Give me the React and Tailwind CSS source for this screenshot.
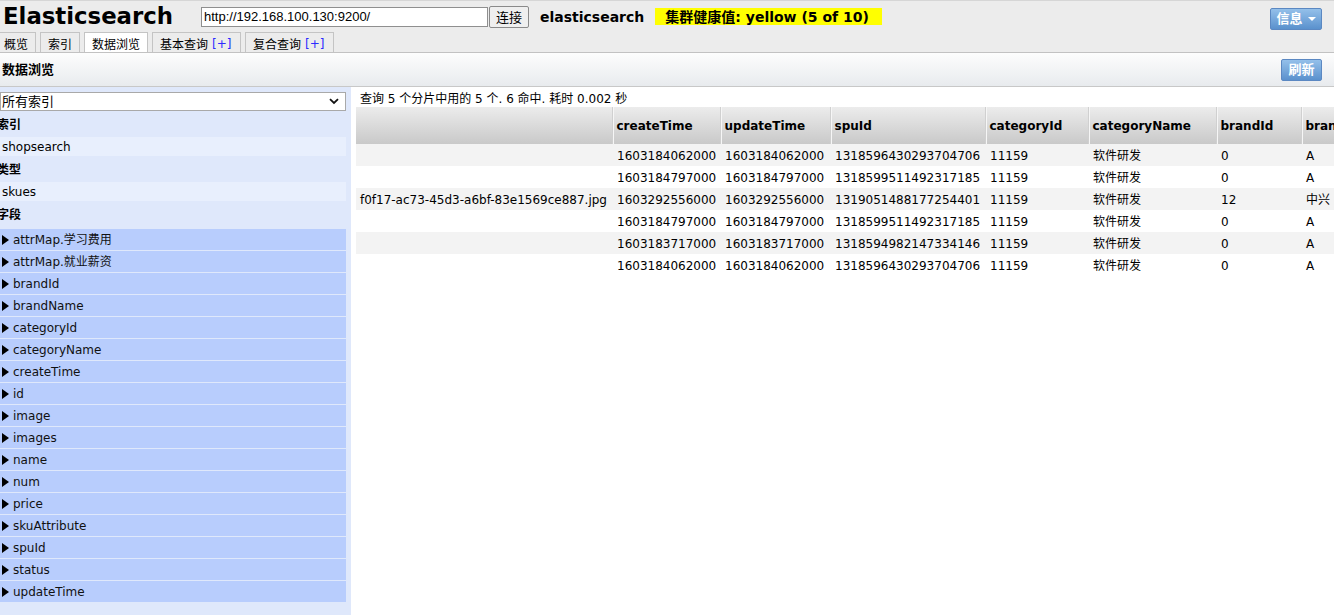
import React from "react";

const fields = [
  "attrMap.学习费用",
  "attrMap.就业薪资",
  "brandId",
  "brandName",
  "categoryId",
  "categoryName",
  "createTime",
  "id",
  "image",
  "images",
  "name",
  "num",
  "price",
  "skuAttribute",
  "spuId",
  "status",
  "updateTime",
];

const cols = [
  { name: "", w: 256 },
  { name: "createTime", w: 108 },
  { name: "updateTime", w: 110 },
  { name: "spuId", w: 155 },
  { name: "categoryId", w: 103 },
  { name: "categoryName", w: 128 },
  { name: "brandId", w: 85 },
  { name: "brandName", w: 200 },
];

const rows = [
  ["", "1603184062000", "1603184062000", "1318596430293704706", "11159", "软件研发", "0", "A"],
  ["", "1603184797000", "1603184797000", "1318599511492317185", "11159", "软件研发", "0", "A"],
  ["f0f17-ac73-45d3-a6bf-83e1569ce887.jpg", "1603292556000", "1603292556000", "1319051488177254401", "11159", "软件研发", "12", "中兴"],
  ["", "1603184797000", "1603184797000", "1318599511492317185", "11159", "软件研发", "0", "A"],
  ["", "1603183717000", "1603183717000", "1318594982147334146", "11159", "软件研发", "0", "A"],
  ["", "1603184062000", "1603184062000", "1318596430293704706", "11159", "软件研发", "0", "A"],
];

function Tab({ children, active, w, first }) {
  return (
    <div
      className={
        "h-[20px] border border-b-0 border-[#c4c4c4] pl-[7px] pt-[3px] flex items-center text-[12px] leading-none whitespace-nowrap overflow-hidden font-['Noto_Sans_CJK_SC','DejaVu_Sans',sans-serif] " +
        (active ? "bg-white" : "bg-[#ececec]") +
        (first ? " -ml-[4px]" : "")
      }
      style={{ width: w }}
    >
      {children}
    </div>
  );
}

function Plus() {
  return <span className="ml-[4px] text-[#2b2bff] font-['DejaVu_Sans',sans-serif]">[+]</span>;
}

export default function App() {
  return (
    <div className="w-[1334px] h-[615px] overflow-hidden bg-white text-black font-['DejaVu_Sans','Noto_Sans_CJK_SC',sans-serif] text-[12px]">
      {/* Header */}
      <div className="bg-[#ececec] border-t border-[#d6d6d6] border-b border-b-[#c2c2c2] flex flex-col">
        <div className="h-[31px] flex items-center">
          <div className="ml-[3px] text-[22.8px] font-bold leading-none">Elasticsearch</div>
          <input
            readOnly
            value="http://192.168.100.130:9200/"
            className="ml-[28px] w-[287px] h-[20px] bg-white border border-[#8f8f8f] px-[2px] text-[13px] font-['Liberation_Sans',sans-serif] outline-none"
          />
          <button className="ml-[1px] h-[22px] px-[6px] bg-[#efefef] border border-[#8a8a8a] rounded-[2px] text-[13px] font-['Noto_Sans_CJK_SC',sans-serif] leading-none">
            连接
          </button>
          <div className="ml-[11px] text-[14px] font-bold leading-none">elasticsearch</div>
          <div className="ml-[11px] h-[17px] w-[227px] bg-[#ffff00] flex items-center pl-[10px] text-[14px] font-bold leading-none whitespace-nowrap">
            集群健康值: yellow (5 of 10)
          </div>
          <button className="ml-auto mr-[12px] mt-[4px] h-[22px] w-[52px] rounded-[2px] border border-[#5b88c2] bg-gradient-to-b from-[#94c0ea] to-[#5a91cd] text-white font-bold text-[13px] flex items-center justify-center gap-[5px] leading-none">
            <span>信息</span>
            <span className="w-0 h-0 border-l-[4px] border-r-[4px] border-t-[4px] border-l-transparent border-r-transparent border-t-white"></span>
          </button>
        </div>
        <div className="h-[20px] flex items-end gap-[4px]">
          <Tab first w={40}>概览</Tab>
          <Tab w={40}>索引</Tab>
          <Tab active w={64}>数据浏览</Tab>
          <Tab w={89}>
            基本查询<Plus />
          </Tab>
          <Tab w={89}>
            复合查询<Plus />
          </Tab>
        </div>
      </div>

      {/* Section bar */}
      <div className="h-[34px] border-b border-[#c8c8c8] bg-gradient-to-b from-[#fdfdfd] to-[#e8ebee] flex items-center">
        <div className="ml-[2px] text-[13px] font-bold leading-none">数据浏览</div>
        <button className="ml-auto mr-[12px] h-[22px] w-[41px] rounded-[2px] border border-[#5b88c2] bg-gradient-to-b from-[#94c0ea] to-[#5a91cd] text-white font-bold text-[13px] flex items-center justify-center leading-none">
          刷新
        </button>
      </div>

      {/* Body */}
      <div className="h-[528px] flex">
        {/* Left */}
        <div className="w-[351px] shrink-0 bg-[#dfe8fb] pt-[5px]">
          <div className="w-[346px] h-[19px] bg-white border border-[#a9a9a9] flex items-center justify-between pl-[1px] pr-[6px]">
            <span className="text-[13px] leading-none">所有索引</span>
            <svg width="10" height="7" viewBox="0 0 10 7">
              <path d="M1 1.2 L5 5 L9 1.2" fill="none" stroke="#111" strokeWidth="1.8" />
            </svg>
          </div>
          <div className="h-[26px] flex items-center pt-[2px] -ml-[3px] font-bold leading-none">索引</div>
          <div className="h-[19px] w-[346px] bg-[#e8effd] flex items-center pl-[2px] leading-none">shopsearch</div>
          <div className="h-[26px] flex items-center pt-[2px] -ml-[3px] font-bold leading-none">类型</div>
          <div className="h-[19px] w-[346px] bg-[#e8effd] flex items-center pl-[2px] leading-none">skues</div>
          <div className="h-[28px] flex items-center -ml-[3px] font-bold leading-none">字段</div>
          <div className="flex flex-col gap-[1px] w-[346px]">
            {fields.map((f) => (
              <div key={f} className="h-[21px] bg-[#b8cdfd] flex items-center pl-[2px] leading-none text-[#111]">
                <span className="w-0 h-0 border-t-[5px] border-b-[5px] border-l-[7px] border-t-transparent border-b-transparent border-l-black"></span>
                <span className="ml-[4px]">{f}</span>
              </div>
            ))}
          </div>
        </div>

        {/* Right */}
        <div className="flex-1 min-w-0 overflow-hidden pl-[5px] pt-[5px]">
          <div className="ml-[4px] h-[15px] leading-[15px] whitespace-nowrap">
            查询 5 个分片中用的 5 个. 6 命中. 耗时 0.002 秒
          </div>
          <table className="table-fixed border-collapse" style={{ width: 1145 }}>
            <colgroup>
              {cols.map((c, i) => (
                <col key={i} style={{ width: c.w }} />
              ))}
            </colgroup>
            <thead>
              <tr className="h-[37px] bg-gradient-to-b from-[#ececec] to-[#c9c9c9]">
                {cols.map((c, i) => (
                  <th
                    key={i}
                    className={
                      "text-left font-bold pl-[4px] whitespace-nowrap overflow-hidden p-0 " +
                      (i > 0 ? "border-l border-[#d0d0d0] shadow-[inset_1px_0_0_#f6f6f6]" : "")
                    }
                  >
                    {c.name}
                  </th>
                ))}
              </tr>
            </thead>
            <tbody>
              {rows.map((r, ri) => (
                <tr key={ri} className={"h-[22px] " + (ri % 2 === 0 ? "bg-[#f3f3f3]" : "bg-white")}>
                  {r.map((v, ci) => (
                    <td
                      key={ci}
                      className={
                        "p-0 pt-[2px] whitespace-nowrap overflow-hidden leading-none " +
                        (ci === 0 ? "text-right pr-[5px]" : "pl-[5px]")
                      }
                    >
                      {v}
                    </td>
                  ))}
                </tr>
              ))}
            </tbody>
          </table>
        </div>
      </div>
    </div>
  );
}
